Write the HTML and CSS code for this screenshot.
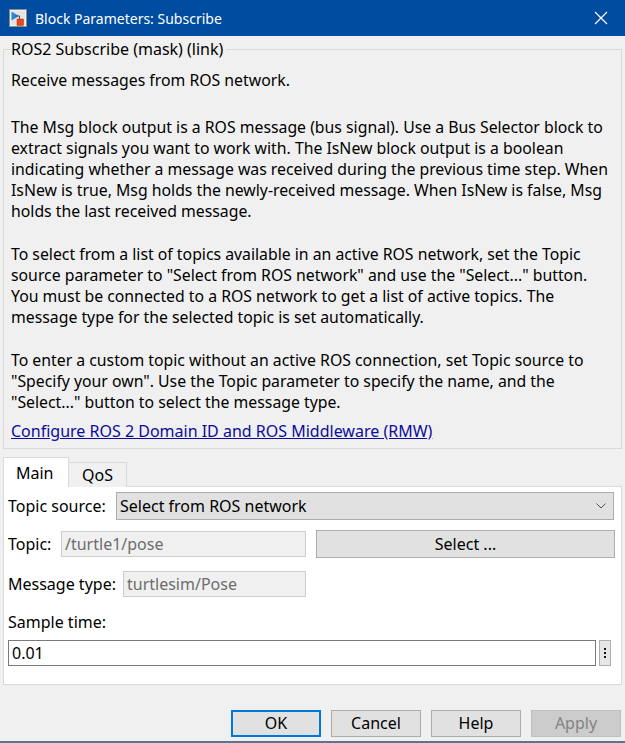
FILE: index.html
```html
<!DOCTYPE html>
<html>
<head>
<meta charset="utf-8">
<link rel="stylesheet" href="styles.css">
</head>
<body>
<div class="titlebar">
  <svg class="appicon" width="18" height="18" viewBox="0 0 18 18">
    <rect x="0.5" y="0.5" width="17" height="17" fill="#f4f4f4" stroke="#8a8a8a"/>
    <rect x="2" y="2" width="14" height="14" fill="#e4e4e4"/>
    <path d="M2.5 2.5 L10 7 L2.5 11.5 Z" fill="#2a8ad8"/>
    <path d="M6 7 H10.5 V10" fill="none" stroke="#555" stroke-width="1"/>
    <rect x="8" y="10" width="6.5" height="6.5" fill="#e8461c" stroke="#b22" stroke-width="0.5"/>
  </svg>
  <span class="title">Block Parameters: Subscribe</span>
  <svg class="close" width="14" height="14" viewBox="0 0 14 14">
    <path d="M1 1 L13 13 M13 1 L1 13" stroke="#fff" stroke-width="1.2"/>
  </svg>
</div>

<fieldset class="group">
  <legend>ROS2 Subscribe (mask) (link)</legend>
  <p class="para first">Receive messages from ROS network.</p>
  <p class="para">The Msg block output is a ROS message (bus signal). Use a Bus Selector block to<br>extract signals you want to work with. The IsNew block output is a boolean<br>indicating whether a message was received during the previous time step. When<br>IsNew is true, Msg holds the newly-received message. When IsNew is false, Msg<br>holds the last received message.</p>
  <p class="para">To select from a list of topics available in an active ROS network, set the Topic<br>source parameter to "Select from ROS network" and use the "Select..." button.<br>You must be connected to a ROS network to get a list of active topics. The<br>message type for the selected topic is set automatically.</p>
  <p class="para last">To enter a custom topic without an active ROS connection, set Topic source to<br>"Specify your own". Use the Topic parameter to specify the name, and the<br>"Select..." button to select the message type.</p>
  <a class="link" href="#">Configure ROS 2 Domain ID and ROS Middleware (RMW)</a>
</fieldset>

<div class="tabs">
  <div class="tab active">Main</div>
  <div class="tab">QoS</div>
</div>
<div class="panel">
  <div class="row r1">
    <span class="label">Topic source:</span>
    <div class="select"><span>Select from ROS network</span>
      <svg width="10" height="6" viewBox="0 0 10 6"><path d="M0.5 0.5 L5 5 L9.5 0.5" fill="none" stroke="#555" stroke-width="1"/></svg>
    </div>
  </div>
  <div class="row r2">
    <span class="label">Topic:</span>
    <div class="input dis w-topic">/turtle1/pose</div>
    <div class="btn wide">Select ...</div>
  </div>
  <div class="row r3">
    <span class="label">Message type:</span>
    <div class="input dis w-type">turtlesim/Pose</div>
  </div>
  <div class="label r4">Sample time:</div>
  <div class="row r5">
    <div class="input edit">0.01</div>
    <div class="dots"><i></i><i></i><i></i></div>
  </div>
</div>

<div class="footer">
  <div class="btn fb ok">OK</div>
  <div class="btn fb">Cancel</div>
  <div class="btn fb">Help</div>
  <div class="btn fb disabled">Apply</div>
</div>
<div class="bottomline"></div>
</body>
</html>
```
FILE: styles.css
```css
html, body {
  margin: 0;
  padding: 0;
}
body {
  width: 625px;
  height: 743px;
  background: #f0f0f0;
  font-family: "Noto Sans", "Open Sans", sans-serif;
  font-size: 16px;
  line-height: 21px;
  color: #000;
  overflow: hidden;
  position: relative;
}
.titlebar {
  height: 36px;
  background: #004ca1;
  display: flex;
  align-items: center;
  padding-left: 9px;
  box-sizing: border-box;
}
.appicon { flex: none; }
.title {
  color: #fff;
  margin-left: 8px;
  font-size: 14px;
  flex: 1;
}
.close { margin-right: 17px; }

.group {
  margin: 3px 3px 0 3px;
  border: 1px solid #d9d9d9;
  padding: 0 7px 6px 7px;
  box-sizing: border-box;
  min-width: 0;
}
.group legend {
  padding: 0 3px 0 0;
  margin-left: 0;
  line-height: 21px;
}
.para {
  margin: 0 0 22px 0;
  line-height: 21px;
  font-size: 15.8px;
  white-space: nowrap;
}
.para.first { margin-top: 10px; margin-bottom: 26px; }
.para.last { margin-bottom: 8px; }
.link {
  color: #0c0c9c;
  text-decoration: underline;
  display: block;
  width: fit-content;
  line-height: 21px;
}

.tabs {
  display: flex;
  align-items: flex-end;
  margin: 8px 0 0 3px;
  height: 30px;
}
.tab {
  border: 1px solid #d9d9d9;
  border-bottom: none;
  background: #f0f0f0;
  height: 25px;
  line-height: 25px;
  padding: 0 13px;
  box-sizing: border-box;
}
.tab.active {
  background: #fff;
  height: 30px;
  line-height: 30px;
  width: 66px;
  padding: 0 0 0 12px;
}
.tab + .tab { border-left: none; }

.panel {
  margin: -1px 3px 0 3px;
  height: 199px;
  background: #fff;
  border: 1px solid #d9d9d9;
  box-sizing: border-box;
  padding: 5px 6px 0 4px;
}
.row {
  display: flex;
  align-items: center;
}
.label { white-space: nowrap; }
.r1 .label { width: 108px; }
.select {
  flex: 1;
  height: 28px;
  background: #e1e1e1;
  border: 1px solid #adadad;
  box-sizing: border-box;
  display: flex;
  align-items: center;
  justify-content: space-between;
  padding: 0 7px 0 3px;
  margin-right: 1px;
}
.r2 { margin-top: 10px; }
.r2 .label { width: 53px; }
.input {
  height: 26px;
  box-sizing: border-box;
  border: 1px solid #7a7a7a;
  padding: 0 3px;
  line-height: 24px;
  background: #fff;
}
.input.dis {
  background: #f0f0f0;
  border-color: #cccccc;
  color: #6d6d6d;
}
.w-topic { width: 245px; }
.w-type { width: 183px; }
.r2 .wide {
  margin-left: 10px;
  flex: 1;
  height: 28px;
}
.r3 { margin-top: 13px; }
.r3 .label { width: 115px; }
.r4 { margin-top: 13px; line-height: 24px; }
.r5 { margin-top: 6px; }
.input.edit {
  flex: 1;
  height: 26px;
  padding-left: 3px;
  border-color: #7a7a7a;
}
.dots {
  width: 10px;
  height: 24px;
  margin-left: 3px;
  margin-right: 4px;
  border: 1px solid #adadad;
  background: #e6e6e6;
  display: flex;
  flex-direction: column;
  align-items: center;
  justify-content: center;
  gap: 2px;
}
.dots i {
  display: block;
  width: 2px;
  height: 2px;
  background: #111;
}

.btn {
  background: #e1e1e1;
  border: 1px solid #adadad;
  box-sizing: border-box;
  display: flex;
  align-items: center;
  justify-content: center;
}
.footer {
  display: flex;
  justify-content: flex-end;
  gap: 10px;
  margin-top: 25px;
  padding-right: 4px;
}
.fb {
  width: 90px;
  height: 27px;
}
.fb.ok {
  border: 2px solid #0078d7;
}
.fb.disabled {
  background: #cccccc;
  border-color: #bfbfbf;
  color: #838383;
}
.bottomline {
  position: absolute;
  left: 0;
  right: 0;
  bottom: 0;
  height: 2px;
  background: #5a7390;
}
```
